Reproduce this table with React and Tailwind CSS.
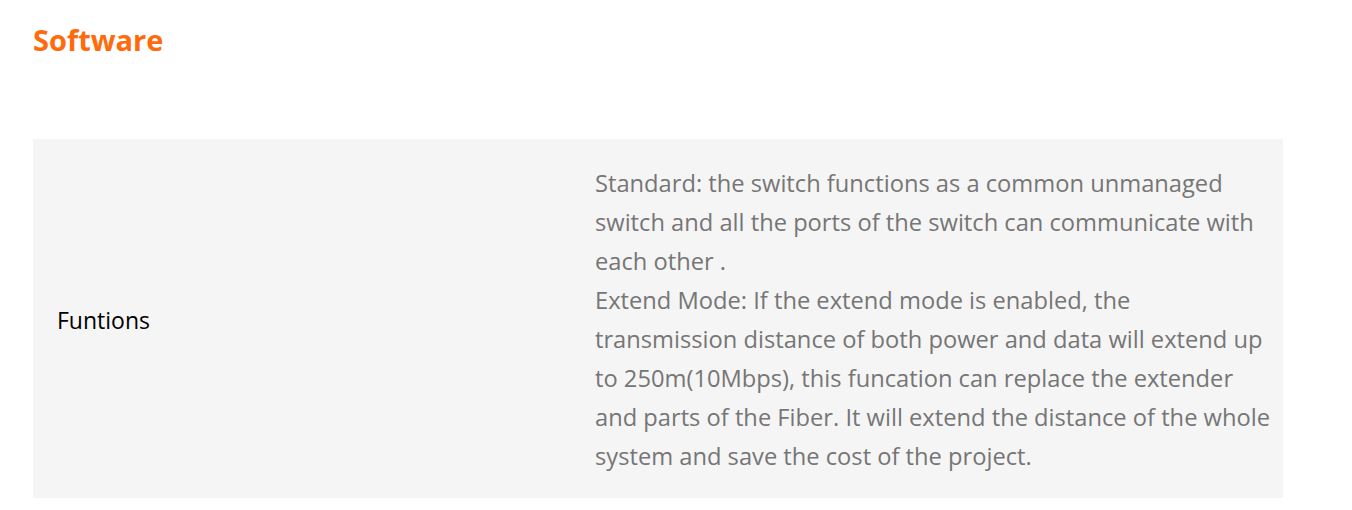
export default function App() {
  const lines = [
    "Standard: the switch functions as a common unmanaged",
    "switch and all the ports of the switch can communicate with",
    "each other .",
    "Extend Mode: If the extend mode is enabled, the",
    "transmission distance of both power and data will extend up",
    "to 250m(10Mbps), this funcation can replace the extender",
    "and parts of the Fiber. It will extend the distance of the whole",
    "system and save the cost of the project.",
  ];
  return (
    <div className="w-[1352px] h-[510px] bg-white" style={{ fontFamily: '"Open Sans", "Noto Sans", sans-serif' }}>
      <div className="pl-[33px] pt-[22px]">
        <h2 className="text-[29px] font-bold leading-[36px] text-[#ff6a0d]">Software</h2>
      </div>
      <div className="ml-[33px] mt-[81px] w-[1250px] bg-[#f5f5f5] flex">
        <div className="w-[538px] flex items-center pl-[24px] pt-[4px] text-[23px] text-black">Funtions</div>
        <div className="flex-1 pl-[24px] pt-[25px] pb-[22px] text-[23.7px] leading-[39px] text-[#767676]">
          {lines.map((l, i) => (
            <div key={i} className="whitespace-nowrap">{l}</div>
          ))}
        </div>
      </div>
    </div>
  );
}
